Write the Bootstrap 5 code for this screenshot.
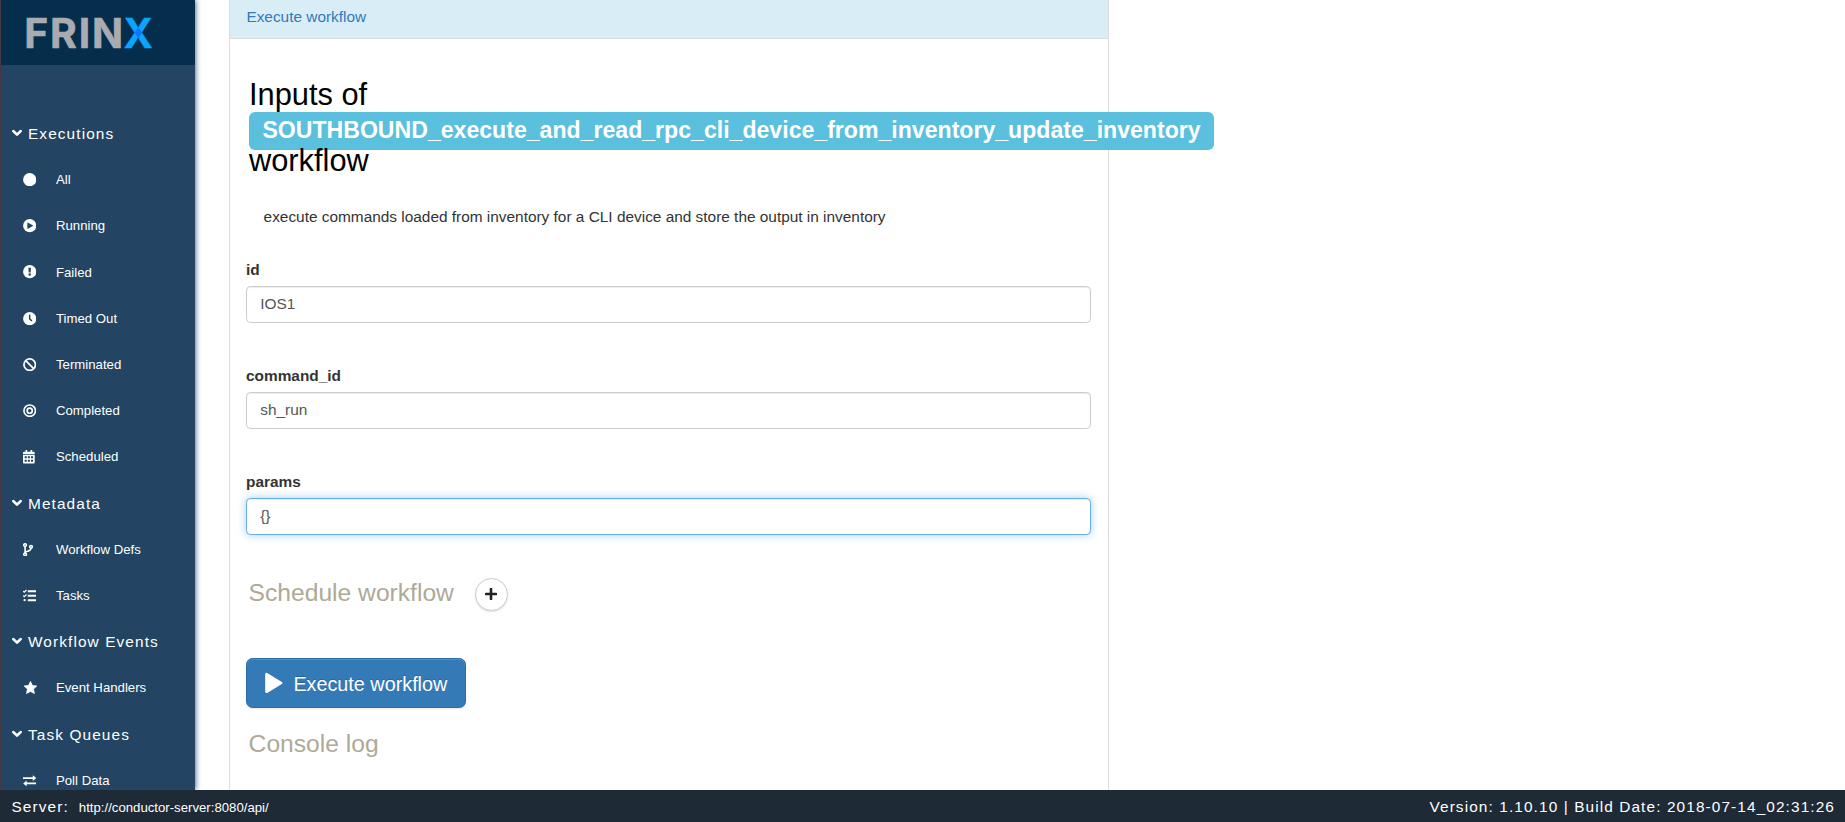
<!DOCTYPE html>
<html lang="en">
<head>
<meta charset="utf-8">
<title>Execute workflow</title>
<link href="https://cdn.jsdelivr.net/npm/bootstrap@5.3.0/dist/css/bootstrap.min.css" rel="stylesheet">
<style>
  body { font-family: "Liberation Sans", Arial, sans-serif; font-size: 15.4px; line-height: 22px; color: #333; background: #fff; }
  .app-shell { height: 822px; }
  .side-menu { width: 195px; background: #234563; border-left: 1px solid #46383e; box-shadow: 0 0 6px #234563; z-index: 2; }
  .brand-box { height: 65px; background: #052d4c; }
  .brand-box svg { margin: 0 0 0 20px; }
  .menu-list { margin-top: 46px; color: #fff; }
  .menu-list > * { height: 46.2px; }
  .menu-head { letter-spacing: 1.1px; padding-left: 11px; gap: 6px; }
  .menu-head svg { width: 10px; height: 10px; margin-top: -2px; }
  .menu-item { font-size: 13.2px; padding-left: 22px; color: #fff; }
  .menu-item svg { width: 13.4px; height: 13.4px; margin-right: 19.6px; margin-top: -1px; }
  .flow-panel { width: 880px; margin-left: 34px; border: 1px solid #ddd; border-width: 0 1px; }
  .flow-head { height: 39px; padding: 6px 16.4px 0; background: #d9edf7; border-bottom: 1px solid #ddd; color: #337ab7; }
  .flow-body { padding: 39px 17px 0 16px; }
  .flow-title { width: 300px; margin: 0 0 29px 3px; font-size: 30.8px; line-height: 33px; color: #000; font-weight: 400; }
  .flow-tag { font-size: 23.1px; line-height: 1; font-weight: 700; color: #fff; background: #5bc0de; border-radius: 5.8px; padding: .2em .58em .3em; white-space: nowrap; }
  .flow-desc { margin: 0 0 30.7px 17.6px; }
  .field { margin-bottom: 41.5px; }
  .field label { display: block; font-weight: 700; margin-bottom: 5.5px; }
  .field .form-control { height: 37px; padding: 6px 13.2px 7px; font-size: 15.4px; line-height: 22px; color: #555; border: 1px solid #ccc; border-radius: 4.4px; box-shadow: inset 0 1px 1px rgba(0,0,0,.075); }
  .field .is-active { border-color: #66afe9; box-shadow: inset 0 1px 1px rgba(0,0,0,.075), 0 0 9px rgba(102,175,233,.6); }
  .sub-title { font-size: 24.64px; line-height: 27px; color: #aea997; font-weight: 400; margin: 0 0 0 2.6px; }
  .btn-round { width: 33px; height: 33px; border-radius: 50%; border: 1px solid #ccc; background: #fff; padding: 0; margin: 1px 0 0 21px; box-shadow: 0 1px 2px rgba(0,0,0,.12); }
  .btn-run { width: 220px; height: 50px; padding: 0; border-radius: 6.6px; border: 1px solid #2e6da4; background: #337ab7; color: #fff; font-size: 19.8px; margin: 47px 0 22px; box-shadow: inset 0 1px 0 rgba(255,255,255,.15), 0 1px 2px rgba(0,0,0,.1); text-shadow: 0 -1px 0 rgba(0,0,0,.2); }
  .status-bar { height: 32px; background: #1e2a35; color: #fff; padding: 6px 10px 0 11.5px; letter-spacing: 1.1px; z-index: 3; }
  .status-bar .server-url { font-size: 13.2px; letter-spacing: 0; margin-left: 10px; }
</style>
</head>
<body>
<svg width="0" height="0" class="position-absolute">
  <symbol id="chev" viewBox="0 0 10 10"><path d="M1.4 3.1 5 6.6 8.6 3.1" fill="none" stroke="#fff" stroke-width="2.7" stroke-linecap="round" stroke-linejoin="round"/></symbol>
</svg>
<div class="app-shell d-flex flex-column overflow-hidden">
  <div class="d-flex flex-grow-1 overflow-hidden">
    <nav class="side-menu flex-shrink-0 position-relative">
      <div class="brand-box">
        <svg width="150" height="65" viewBox="0 0 150 65" font-family="Inter, sans-serif" font-weight="700" font-size="40.8">
          <text x="3.2" y="47.7" fill="#a9abb0" stroke="#a9abb0" stroke-width=".6" textLength="99" lengthAdjust="spacing">FRIN</text>
          <text x="102.6" y="47.7" fill="#0aa5ff" stroke="#0aa5ff" stroke-width=".4" textLength="29.4" lengthAdjust="spacingAndGlyphs">X</text>
          <path d="M117.4 27l3.8 5.7-3.8 5.6-3.8-5.6z" fill="#0878ff"/>
        </svg>
      </div>
      <div class="menu-list">
        <div class="menu-head d-flex align-items-center"><svg><use href="#chev"/></svg>Executions</div>
        <div class="menu-item d-flex align-items-center"><svg viewBox="0 0 14 14"><circle cx="7" cy="7" r="6.9" fill="#fff"/></svg>All</div>
        <div class="menu-item d-flex align-items-center"><svg viewBox="0 0 14 14"><circle cx="7" cy="7" r="6.9" fill="#fff"/><path d="M5 4.1 10.2 7 5 9.9z" fill="#234563" stroke="#234563" stroke-width=".8" stroke-linejoin="round"/></svg>Running</div>
        <div class="menu-item d-flex align-items-center"><svg viewBox="0 0 14 14"><circle cx="7" cy="7" r="6.9" fill="#fff"/><path d="M5.7 3h2.6L8 7.9H6z" fill="#234563"/><circle cx="7" cy="9.9" r="1.3" fill="#234563"/></svg>Failed</div>
        <div class="menu-item d-flex align-items-center"><svg viewBox="0 0 14 14"><circle cx="7" cy="7" r="6.9" fill="#fff"/><path d="M7 3v4.3l2.3 1.9" fill="none" stroke="#234563" stroke-width="1.6"/></svg>Timed Out</div>
        <div class="menu-item d-flex align-items-center"><svg viewBox="0 0 14 14"><g fill="none" stroke="#fff" stroke-width="1.8"><circle cx="7" cy="7" r="6"/><path d="m2.8 2.8 8.4 8.4"/></g></svg>Terminated</div>
        <div class="menu-item d-flex align-items-center"><svg viewBox="0 0 14 14"><g fill="none" stroke="#fff" stroke-width="1.7"><circle cx="7" cy="7" r="6"/><circle cx="7" cy="7" r="2.7"/></g></svg>Completed</div>
        <div class="menu-item d-flex align-items-center"><svg viewBox="0 0 448 512" preserveAspectRatio="xMinYMid"><path fill="#fff" fill-rule="evenodd" d="M0 464c0 26 22 48 48 48h352c26 0 48-22 48-48V192H0zM64 240h80v80H64zm120 0h80v80h-80zm120 0h80v80h-80zM64 370h80v80H64zm120 0h80v80h-80zm120 0h80v80h-80zM400 64h-48V12c0-7-5-12-12-12h-40c-7 0-12 5-12 12v52H160V12c0-7-5-12-12-12h-40c-7 0-12 5-12 12v52H48C22 64 0 86 0 112v48h448v-48c0-26-22-48-48-48z"/></svg>Scheduled</div>
        <div class="menu-head d-flex align-items-center"><svg><use href="#chev"/></svg>Metadata</div>
        <div class="menu-item d-flex align-items-center"><svg viewBox="0 0 12 16" preserveAspectRatio="xMinYMid"><g fill="none" stroke="#fff" stroke-width="1.9"><circle cx="2.5" cy="2.5" r="1.6"/><circle cx="2.5" cy="13.5" r="1.6"/><circle cx="9.6" cy="4.5" r="1.6"/><path d="M2.5 4v8c0-3 7.1-1 7.1-6"/></g></svg>Workflow Defs</div>
        <div class="menu-item d-flex align-items-center"><svg viewBox="0 0 14 14"><g fill="none" stroke="#fff"><path stroke-width="2" d="M5 2.3h9M5 7h9M5 11.7h9"/><path stroke-width="1.3" d="m.2 2.2 1.1 1.1L3.7 1M.2 6.9 1.3 8l2.4-2.3"/></g><circle cx="1.7" cy="11.7" r="1.2" fill="#fff"/></svg>Tasks</div>
        <div class="menu-head d-flex align-items-center"><svg><use href="#chev"/></svg>Workflow Events</div>
        <div class="menu-item d-flex align-items-center"><svg viewBox="0 0 14 14" class="overflow-visible"><path transform="translate(.8)" fill="#fff" stroke="#fff" stroke-width=".8" stroke-linejoin="round" d="m7 .4 2 4.2 4.6.6-3.4 3.2.9 4.7L7 10.9l-4.1 2.2.9-4.7L.4 5.2 5 4.6z"/></svg>Event Handlers</div>
        <div class="menu-head d-flex align-items-center"><svg><use href="#chev"/></svg>Task Queues</div>
        <div class="menu-item d-flex align-items-center"><svg viewBox="0 0 14 14"><path fill="#fff" d="M0 3.3h10.2V1.2L13.8 4.2l-3.6 3V5.1H0zM14 8.9H3.8V6.9L.2 9.9l3.6 3v-2.1H14z"/></svg>Poll Data</div>
      </div>
    </nav>
    <main class="flow-panel flex-shrink-0">
      <div class="flow-head">Execute workflow</div>
      <div class="flow-body">
        <h1 class="flow-title">Inputs of <span class="flow-tag">SOUTHBOUND_execute_and_read_rpc_cli_device_from_inventory_update_inventory</span> workflow</h1>
        <p class="flow-desc">execute commands loaded from inventory for a CLI device and store the output in inventory</p>
        <div class="field"><label for="f1">id</label><input id="f1" class="form-control" value="IOS1"></div>
        <div class="field"><label for="f2">command_id</label><input id="f2" class="form-control" value="sh_run"></div>
        <div class="field"><label for="f3">params</label><input id="f3" class="form-control is-active" value="{}"></div>
        <div class="d-flex align-items-start">
          <h2 class="sub-title pt-0" style="margin-top:2px">Schedule workflow</h2>
          <button class="btn btn-round d-flex align-items-center justify-content-center" aria-label="Add schedule"><svg width="12" height="12" viewBox="0 0 12 12"><path d="M6 1v10M1 6h10" stroke="#222" stroke-width="2.6" stroke-linecap="round"/></svg></button>
        </div>
        <button class="btn btn-run d-flex align-items-center"><svg width="18" height="22" viewBox="0 0 18 22" class="flex-shrink-0" style="margin:0 10.4px 0 18px"><path d="M1.5 2.2v17.6L16.2 11z" fill="#fff" stroke="#fff" stroke-width="2.6" stroke-linejoin="round"/></svg><span class="pt-1">Execute workflow</span></button>
        <h2 class="sub-title">Console log</h2>
      </div>
    </main>
  </div>
  <footer class="status-bar d-flex justify-content-between flex-shrink-0 position-relative">
    <div>Server:<span class="server-url">http://conductor-server:8080/api/</span></div>
    <div>Version: 1.10.10 | Build Date: 2018-07-14_02:31:26</div>
  </footer>
</div>
<script src="https://cdn.jsdelivr.net/npm/bootstrap@5.3.0/dist/js/bootstrap.bundle.min.js"></script>
</body>
</html>
